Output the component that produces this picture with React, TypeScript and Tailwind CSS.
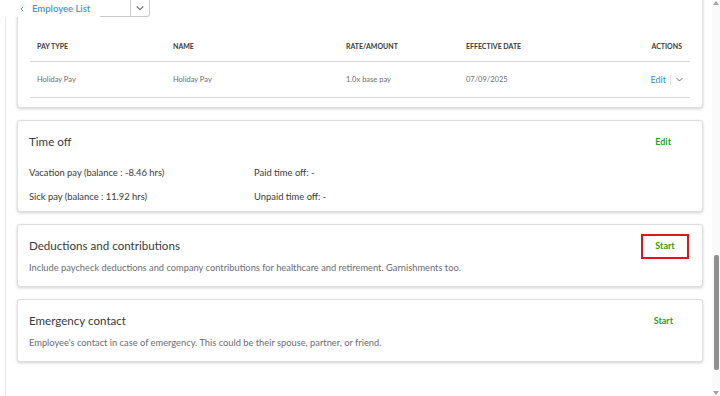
import React from 'react';

const font = { fontFamily: 'Lato, "Open Sans", sans-serif' };

function Chevron({ className }: { className?: string }) {
  return (
    <svg viewBox="0 0 12 12" className={className} fill="none" stroke="currentColor" strokeWidth="1.3">
      <path d="M2.5 4.5 6 8l3.5-3.5" strokeLinecap="round" strokeLinejoin="round" />
    </svg>
  );
}

function Card({ children, className = '' }: { children: React.ReactNode; className?: string }) {
  return (
    <div className={`bg-white border border-[#dcdde0] rounded-[3px] shadow-[0_1px_3px_rgba(0,0,0,0.18)] ${className}`}>
      {children}
    </div>
  );
}

export default function App() {
  return (
    <div className="w-[720px] h-[396px] overflow-hidden relative flex bg-white text-[#393a3d]" style={font}>
      {/* sticky breadcrumb */}
      <div className="absolute left-0 top-0 z-10 flex items-start">
        <div className="w-[100px] h-[17px] bg-white flex items-center pl-[20px] gap-[8px] text-[#3a97dd]">
          <svg viewBox="0 0 6 8" className="w-[4px] h-[6px]" fill="none" stroke="currentColor" strokeWidth="1.4">
            <path d="M4.5 1 1.5 4l3 3" />
          </svg>
          <span className="text-[9.5px] font-semibold leading-none">Employee List</span>
        </div>
        <div className="w-[30px] h-[17px] bg-white border-b border-[#c9cace]" />
        <div className="w-[20px] h-[17px] bg-white border border-t-0 border-[#c9cace] rounded-br-[3px] flex items-center justify-center text-[#6b6c72]">
          <Chevron className="w-[10px] h-[10px]" />
        </div>
      </div>

      <div className="ml-[5px] border-l border-[#e6e7ea] flex-1 pl-[11px] pr-[9px] flex flex-col gap-[12px]">
        {/* pay table card */}
        <Card className="-mt-[12px] pt-[43px] pb-[9px] px-[12px]">
          <div className="text-[7px] font-bold text-[#393a3d] grid grid-cols-[136px_173px_120px_1fr_60px] h-[30px] items-center border-b border-[#d4d7dc] pl-[7px] pr-[8px]">
            <span>PAY TYPE</span>
            <span>NAME</span>
            <span>RATE/AMOUNT</span>
            <span>EFFECTIVE DATE</span>
            <span className="text-right">ACTIONS</span>
          </div>
          <div className="text-[7.5px] text-[#6b6c72] grid grid-cols-[136px_173px_120px_1fr_60px] h-[36px] items-center border-b border-[#d4d7dc] pl-[7px] pr-[6px]">
            <span>Holiday Pay</span>
            <span>Holiday Pay</span>
            <span>1.0x base pay</span>
            <span>07/09/2025</span>
            <span className="flex items-center justify-end gap-[4px]">
              <span className="text-[#2d8fd6] text-[9px]">Edit</span>
              <span className="w-px h-[10px] bg-[#e3e4e7]" />
              <Chevron className="w-[9px] h-[9px] text-[#6b6c72]" />
            </span>
          </div>
        </Card>

        {/* time off */}
        <Card className="h-[92px] px-[11px] pt-[11px]">
          <div className="flex items-center justify-between h-[20px]">
            <span className="text-[11.6px]">Time off</span>
            <span className="text-[9px] font-bold text-[#2ca01c] mr-[20px]">Edit</span>
          </div>
          <div className="grid grid-cols-[225px_1fr] text-[9.4px] mt-[9px]">
            <span className="h-[24px] flex items-center">Vacation pay (balance : -8.46 hrs)</span>
            <span className="h-[24px] flex items-center">Paid time off: -</span>
            <span className="h-[24px] flex items-center">Sick pay (balance : 11.92 hrs)</span>
            <span className="h-[24px] flex items-center">Unpaid time off: -</span>
          </div>
        </Card>

        {/* deductions */}
        <Card className="h-[63px] px-[11px] pt-[11px] relative">
          <div className="flex items-center justify-between h-[20px]">
            <span className="text-[11.6px]">Deductions and contributions</span>
            <span className="w-[48px] h-[25px] border-2 border-[#e0141a] flex items-center justify-center text-[9px] font-bold text-[#2ca01c] mr-[2px]">
              Start
            </span>
          </div>
          <div className="text-[9.3px] text-[#6b6c72] mt-[5px]">
            Include paycheck deductions and company contributions for healthcare and retirement. Garnishments too.
          </div>
        </Card>

        {/* emergency */}
        <Card className="h-[63px] px-[11px] pt-[11px]">
          <div className="flex items-center justify-between h-[20px]">
            <span className="text-[11.6px]">Emergency contact</span>
            <span className="text-[9px] font-bold text-[#2ca01c] mr-[18px]">Start</span>
          </div>
          <div className="text-[9.3px] text-[#6b6c72] mt-[5px]">
            Employee's contact in case of emergency. This could be their spouse, partner, or friend.
          </div>
        </Card>
      </div>

      {/* scrollbar */}
      <div className="w-[8px] h-full flex flex-col items-center bg-[#fafafa]">
        <div className="w-0 h-0 border-l-[3px] border-r-[3px] border-b-[4px] border-l-transparent border-r-transparent border-b-[#a3a3a3] mt-[1px]" />
        <div className="w-[5px] h-[115px] bg-[#8f8f8f] rounded-[2px] mt-[250px]" />
        <div className="flex-1" />
        <div className="w-0 h-0 border-l-[3px] border-r-[3px] border-t-[4px] border-l-transparent border-r-transparent border-t-[#a3a3a3] mb-[1px]" />
      </div>
    </div>
  );
}
